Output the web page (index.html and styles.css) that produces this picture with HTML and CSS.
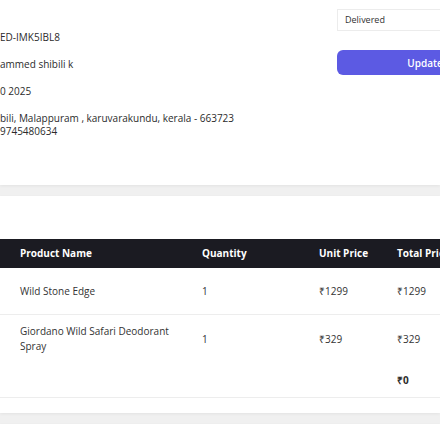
FILE: index.html
```html
<!DOCTYPE html>
<html>
<head>
<meta charset="utf-8">
<link rel="stylesheet" href="styles.css">
</head>
<body>
<div class="page">
  <section class="card top-card">
    <div class="info">
      <p>ED-IMK5IBL8</p>
      <p>ammed shibili k</p>
      <p>0 2025</p>
      <p>bili, Malappuram , karuvarakundu, kerala - 663723<br>9745480634</p>
    </div>
    <div class="status">
      <div class="select">Delivered</div>
      <button class="btn">Update</button>
    </div>
  </section>
  <section class="card items-card">
    <div class="table">
      <div class="row head">
        <div class="cell">Product Name</div>
        <div class="cell">Quantity</div>
        <div class="cell">Unit Price</div>
        <div class="cell">Total Price</div>
      </div>
      <div class="row item">
        <div class="cell">Wild Stone Edge</div>
        <div class="cell">1</div>
        <div class="cell">₹1299</div>
        <div class="cell">₹1299</div>
      </div>
      <div class="row item last">
        <div class="cell">Giordano Wild Safari Deodorant Spray</div>
        <div class="cell">1</div>
        <div class="cell">₹329</div>
        <div class="cell">₹329</div>
      </div>
      <div class="row total">
        <div class="cell"></div>
        <div class="cell"></div>
        <div class="cell"></div>
        <div class="cell strong">₹0</div>
      </div>
    </div>
  </section>
  <section class="card next-card"></section>
</div>
</body>
</html>
```
FILE: styles.css
```css
* { box-sizing: border-box; }
html, body { margin: 0; padding: 0; }
body {
  background: #f0f0f0;
  font-family: "Open Sans", "Liberation Sans", sans-serif;
  color: #2b2b2b;
  width: 440px;
  height: 440px;
  overflow: hidden;
}
.page { display: flex; flex-direction: column; gap: 11px; width: 440px; height: 440px; overflow: hidden; }
.card {
  background: #fff;
  box-shadow: 0 1px 3px rgba(0,0,0,0.06);
}
.top-card {
  height: 185px;
  flex: none;
  display: flex;
}
.info {
  width: 337px;
  flex: none;
  padding-top: 31px;
  display: flex;
  flex-direction: column;
  gap: 14px;
  font-size: 10px;
  line-height: 13px;
}
.info p { margin: 0; white-space: nowrap; }
.status {
  flex: 1;
  padding-top: 9px;
  display: flex;
  flex-direction: column;
  gap: 19px;
  overflow: hidden;
}
.select {
  width: 103px;
  height: 22px;
  border: 1px solid #ececec;
  border-right: none;
  padding-left: 7px;
  font-size: 9px;
  line-height: 20px;
  color: #333;
}
.btn {
  width: 176px;
  flex: none;
  height: 25px;
  border: none;
  border-radius: 6px;
  background: #5c5ae3;
  color: #fff;
  font-family: inherit;
  font-size: 10px;
  font-weight: 600;
  padding: 0;
}
.items-card {
  height: 217px;
  flex: none;
  padding-top: 43px;
  overflow: hidden;
}
.table { display: flex; flex-direction: column; }
.row {
  display: grid;
  grid-template-columns: 202px 117px 78px 1fr;
  align-items: center;
  font-size: 10px;
  line-height: 15px;
}
.cell { white-space: nowrap; }
.row .cell:first-child { padding-left: 20px; padding-right: 24px; white-space: normal; }
.head {
  height: 29px;
  background: #1b1b22;
  color: #fff;
  font-weight: 700;
}
.item { height: 47px; border-bottom: 1px solid #ededed; color: #333; }
.item.last { height: 48px; border-bottom: none; }
.total { height: 35px; border-bottom: 1px solid #ededed; }
.strong { font-weight: 700; }
.next-card { flex: 1; }
```
